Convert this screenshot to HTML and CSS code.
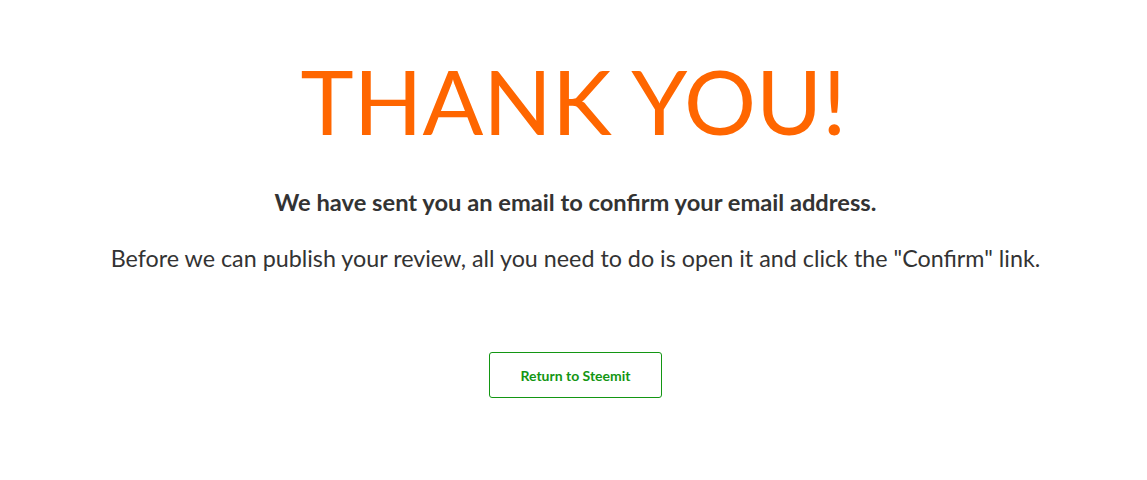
FILE: index.html
```html
<!DOCTYPE html>
<html>
<head>
<meta charset="utf-8">
<link rel="stylesheet" href="styles.css">
</head>
<body>
<main class="thanks">
  <h1 class="title">THANK YOU!</h1>
  <p class="lead">We have sent you an email to confirm your email address.</p>
  <p class="info">Before we can publish your review, all you need to do is open it and click the "Confirm" link.</p>
  <a class="btn" href="#">Return to Steemit</a>
</main>
</body>
</html>
```

FILE: styles.css
```css
html, body {
  margin: 0;
  padding: 0;
  background: #fff;
}
body {
  font-family: Lato, "Open Sans", sans-serif;
  color: #333;
}
.thanks {
  display: flex;
  flex-direction: column;
  align-items: center;
  text-align: center;
  padding-top: 46px;
}
.title {
  margin: 0;
  font-size: 90px;
  font-weight: 400;
  line-height: 108px;
  color: #ff6600;
}
.lead {
  margin: 32px 0 0 4px;
  font-size: 23.7px;
  font-weight: 700;
  line-height: 32px;
}
.info {
  margin: 24px 0 0 4px;
  font-size: 23.3px;
  font-weight: 400;
  line-height: 32px;
}
.btn {
  margin: 78px 0 0 4px;
  box-sizing: border-box;
  width: 173px;
  height: 46px;
  display: flex;
  align-items: center;
  justify-content: center;
  border: 1px solid #139613;
  border-radius: 3px;
  color: #139613;
  font-size: 14px;
  font-weight: 700;
  text-decoration: none;
}
```
